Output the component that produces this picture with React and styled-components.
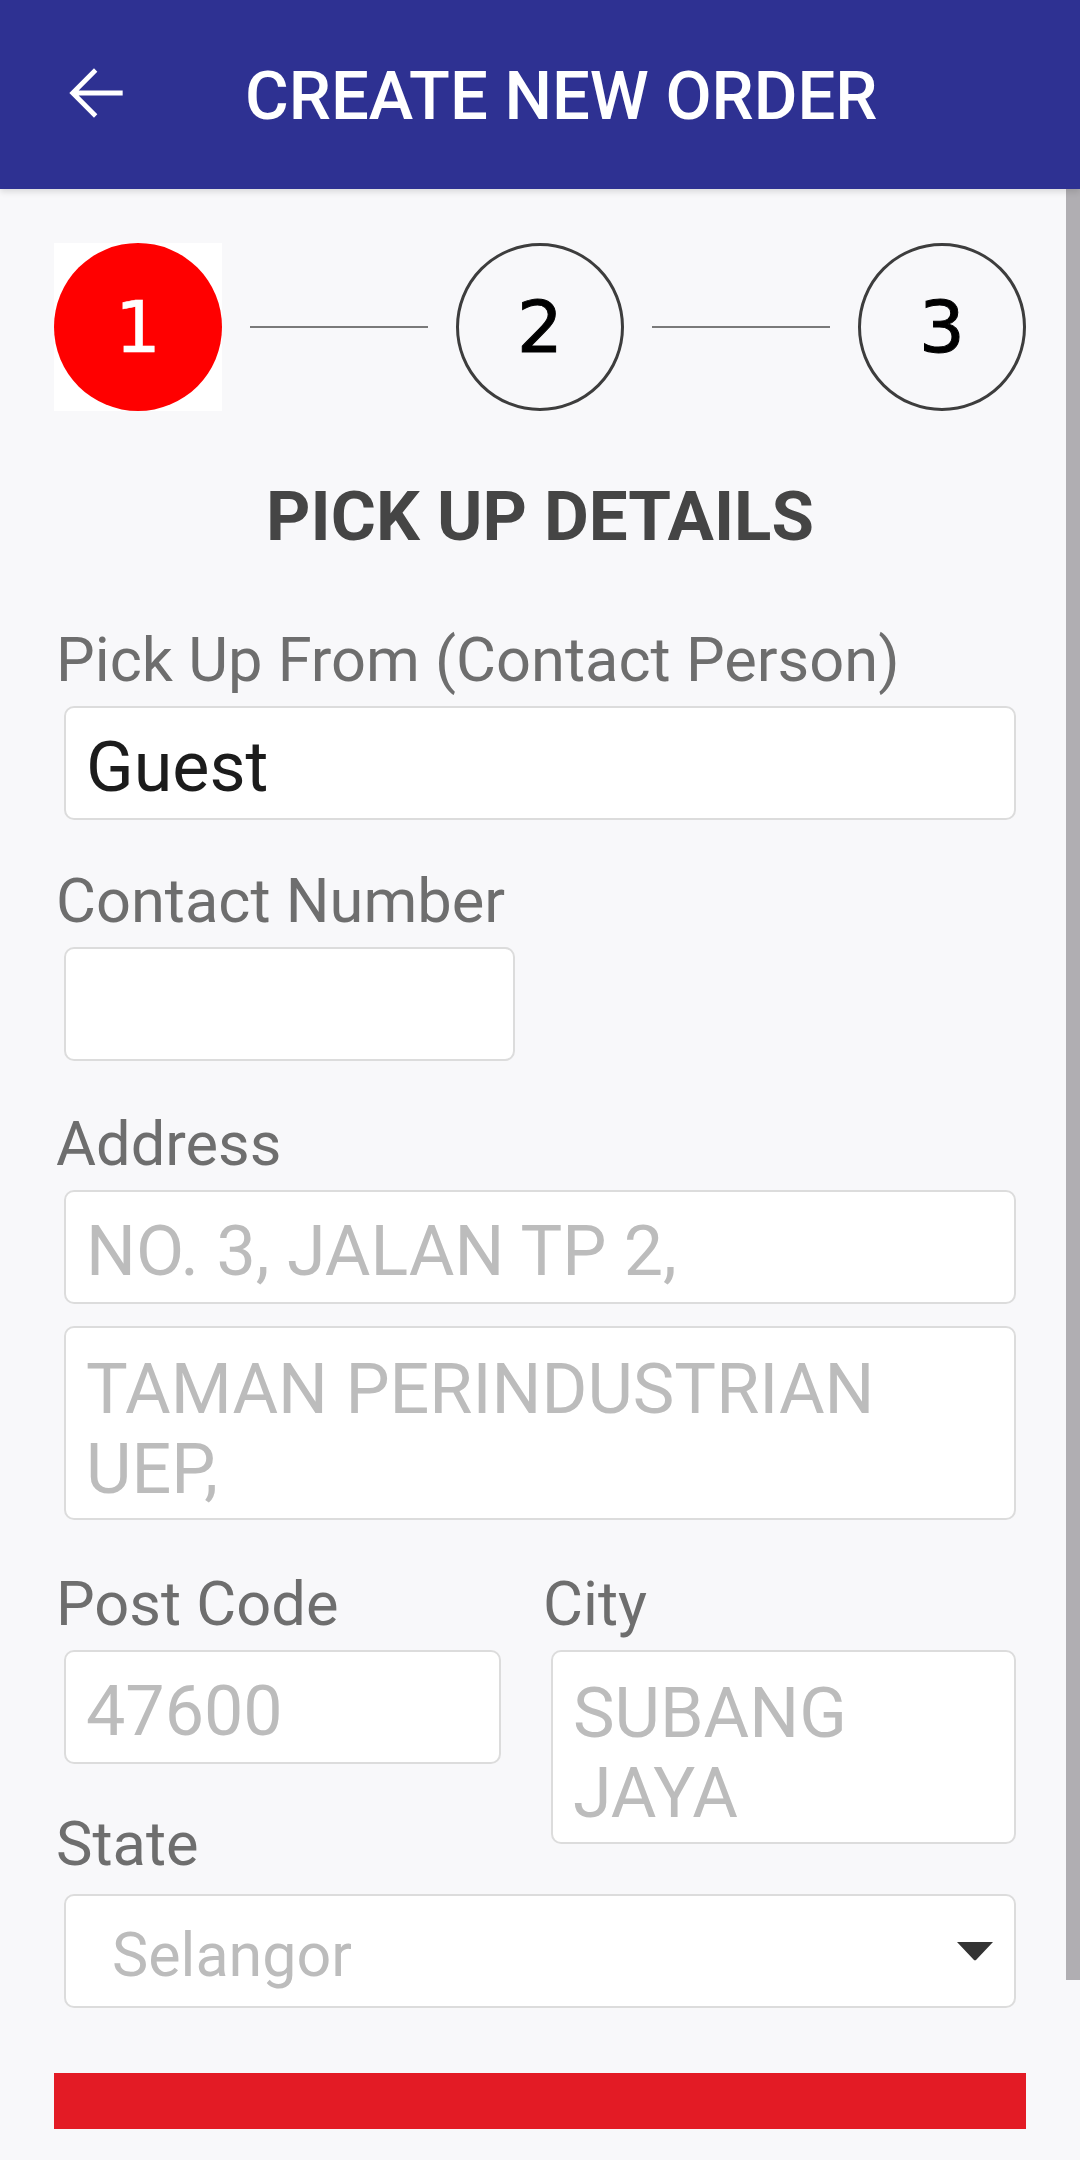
import React from "react";
import styled, { createGlobalStyle } from "styled-components";

const GlobalStyle = createGlobalStyle`
  html, body {
    margin: 0;
    padding: 0;
    background: #f8f8fa;
  }
  body {
    font-family: Roboto, "Noto Sans", sans-serif;
  }
  * {
    box-sizing: border-box;
  }
`;

const Screen = styled.div`
  width: 1080px;
  height: 2160px;
  overflow: hidden;
  display: flex;
  flex-direction: column;
  background: #f8f8fa;
`;

const Header = styled.header`
  height: 189px;
  flex-shrink: 0;
  display: flex;
  align-items: center;
  padding-left: 56px;
  background: #2e3192;
  box-shadow: 0 3px 6px rgba(0, 0, 0, 0.12);
  position: relative;
  z-index: 1;
`;

const BackButton = styled.button`
  width: 80px;
  height: 80px;
  padding: 0;
  border: 0;
  background: none;
  display: flex;
  margin-top: -4px;
`;

const HeaderTitle = styled.h1`
  margin: 2px 0 0 109px;
  font-family: Roboto, sans-serif;
  font-weight: 500;
  font-size: 67px;
  color: #ffffff;
  letter-spacing: 0;
`;

const Body = styled.main`
  flex: 1;
  position: relative;
  display: flex;
  flex-direction: column;
  padding: 54px 56px 0 56px;
`;

const ScrollThumb = styled.div`
  position: absolute;
  top: 0;
  right: 0;
  width: 14px;
  height: 1791px;
  background: #b0aeb2;
`;

const Stepper = styled.div`
  display: flex;
  align-items: center;
  margin: 0 -2px;
`;

const Step = styled.div`
  width: 168px;
  height: 168px;
  flex-shrink: 0;
  display: flex;
  align-items: center;
  justify-content: center;
  background: ${(p) => (p.$active ? "#ffffff" : "transparent")};
  border-radius: ${(p) => (p.$active ? "0" : "50%")};
`;

const StepCircle = styled.div`
  width: 168px;
  height: 168px;
  border-radius: 50%;
  display: flex;
  align-items: center;
  justify-content: center;
  background: ${(p) => (p.$active ? "#ff0000" : "transparent")};
  border: ${(p) => (p.$active ? "none" : "3px solid #3d3d3d")};
  color: ${(p) => (p.$active ? "#ffffff" : "#000000")};
  font-family: "DejaVu Sans", sans-serif;
  font-size: 72px;
  line-height: 1;
  -webkit-text-stroke: ${(p) => (p.$active ? "0.5px #ffffff" : "1px #000000")};
`;

const StepLine = styled.div`
  flex: 1;
  height: 2px;
  margin: 0 28px;
  background: #7a7a7a;
`;

const SectionTitle = styled.h2`
  margin: 64px 0 0;
  text-align: center;
  font-family: Roboto, sans-serif;
  font-weight: 700;
  font-size: 69px;
  line-height: 83px;
  color: #454545;
`;

const Label = styled.label`
  display: block;
  margin-top: ${(p) => p.$top ?? 45}px;
  font-family: Roboto, sans-serif;
  font-size: 61.4px;
  line-height: 72px;
  color: #6e6e6e;
  white-space: nowrap;
`;

const fieldBase = `
  display: block;
  margin: 10px 8px 0;
  border: 2px solid #dcdcdc;
  border-radius: 10px;
  background: #ffffff;
  font-family: Roboto, sans-serif;
  font-size: 70px;
  line-height: 80px;
  color: #1c1c1c;
  padding: 19px 20px 11px;
  outline: none;
  &::placeholder {
    color: #bcbcbc;
    opacity: 1;
  }
`;

const TextInput = styled.input`
  ${fieldBase}
  height: 114px;
  width: ${(p) => (p.$width ? `${p.$width}px` : "auto")};
  align-self: ${(p) => (p.$width ? "flex-start" : "stretch")};
`;

const TextArea = styled.textarea`
  ${fieldBase}
  height: 194px;
  margin-top: ${(p) => p.$top ?? 10}px;
  padding-top: 21px;
  resize: none;
  overflow: hidden;
`;

const FieldGrid = styled.div`
  display: grid;
  grid-template-columns: 453px 1fr;
  grid-template-rows: auto 114px auto;
  column-gap: 34px;
`;

const GridInput = styled(TextInput)`
  grid-column: 1;
  grid-row: 2;
`;

const GridArea = styled(TextArea)`
  grid-column: 2;
  grid-row: 2 / span 2;
`;

const Select = styled.div`
  display: flex;
  align-items: center;
  justify-content: space-between;
  height: 114px;
  margin: 14px 8px 0;
  padding: 0 20px 0 46px;
  border: 2px solid #dcdcdc;
  border-radius: 10px;
  background: #ffffff;
  font-family: Roboto, sans-serif;
  font-size: 61px;
  color: #bcbcbc;
  line-height: 80px;
`;

const SelectText = styled.span`
  padding-top: 8px;
`;

const SubmitBar = styled.button`
  margin: 65px -2px 0;
  height: 56px;
  border: 0;
  background: #e31b25;
  flex-shrink: 0;
`;

const BackArrow = () => (
  <svg width="80" height="80" viewBox="0 0 24 24" fill="#ffffff">
    <path d="M20 11.25H6.8l5.6-5.6L11.4 4.6 4 12l7.4 7.4 1-1.05-5.6-5.6H20v-1.5z" />
  </svg>
);

const CaretDown = () => (
  <svg width="38" height="20" viewBox="0 0 38 20">
    <path d="M1 1h36L20.5 18.5a2 2 0 0 1-3 0z" fill="#333333" />
  </svg>
);

const steps = [1, 2, 3];

export default function App() {
  return (
    <>
      <GlobalStyle />
      <Screen>
        <Header>
          <BackButton aria-label="Back">
            <BackArrow />
          </BackButton>
          <HeaderTitle>CREATE NEW ORDER</HeaderTitle>
        </Header>

        <Body>
          <ScrollThumb />

          <Stepper>
            {steps.map((n, i) => (
              <React.Fragment key={n}>
                {i > 0 && <StepLine />}
                <Step $active={n === 1}>
                  <StepCircle $active={n === 1}>{n}</StepCircle>
                </Step>
              </React.Fragment>
            ))}
          </Stepper>

          <SectionTitle>PICK UP DETAILS</SectionTitle>

          <Label $top={66}>Pick Up From (Contact Person)</Label>
          <TextInput defaultValue="Guest" />

          <Label>Contact Number</Label>
          <TextInput $width={451} />

          <Label $top={47}>Address</Label>
          <TextInput placeholder="NO. 3, JALAN TP 2," />
          <TextArea $top={22} placeholder="TAMAN PERINDUSTRIAN UEP," />

          <FieldGrid>
            <Label $top={48}>Post Code</Label>
            <Label $top={48}>City</Label>
            <GridInput placeholder="47600" />
            <GridArea placeholder="SUBANG JAYA" />
            <Label $top={54}>State</Label>
          </FieldGrid>

          <Select>
            <SelectText>Selangor</SelectText>
            <CaretDown />
          </Select>

          <SubmitBar aria-label="Next" />
        </Body>
      </Screen>
    </>
  );
}
